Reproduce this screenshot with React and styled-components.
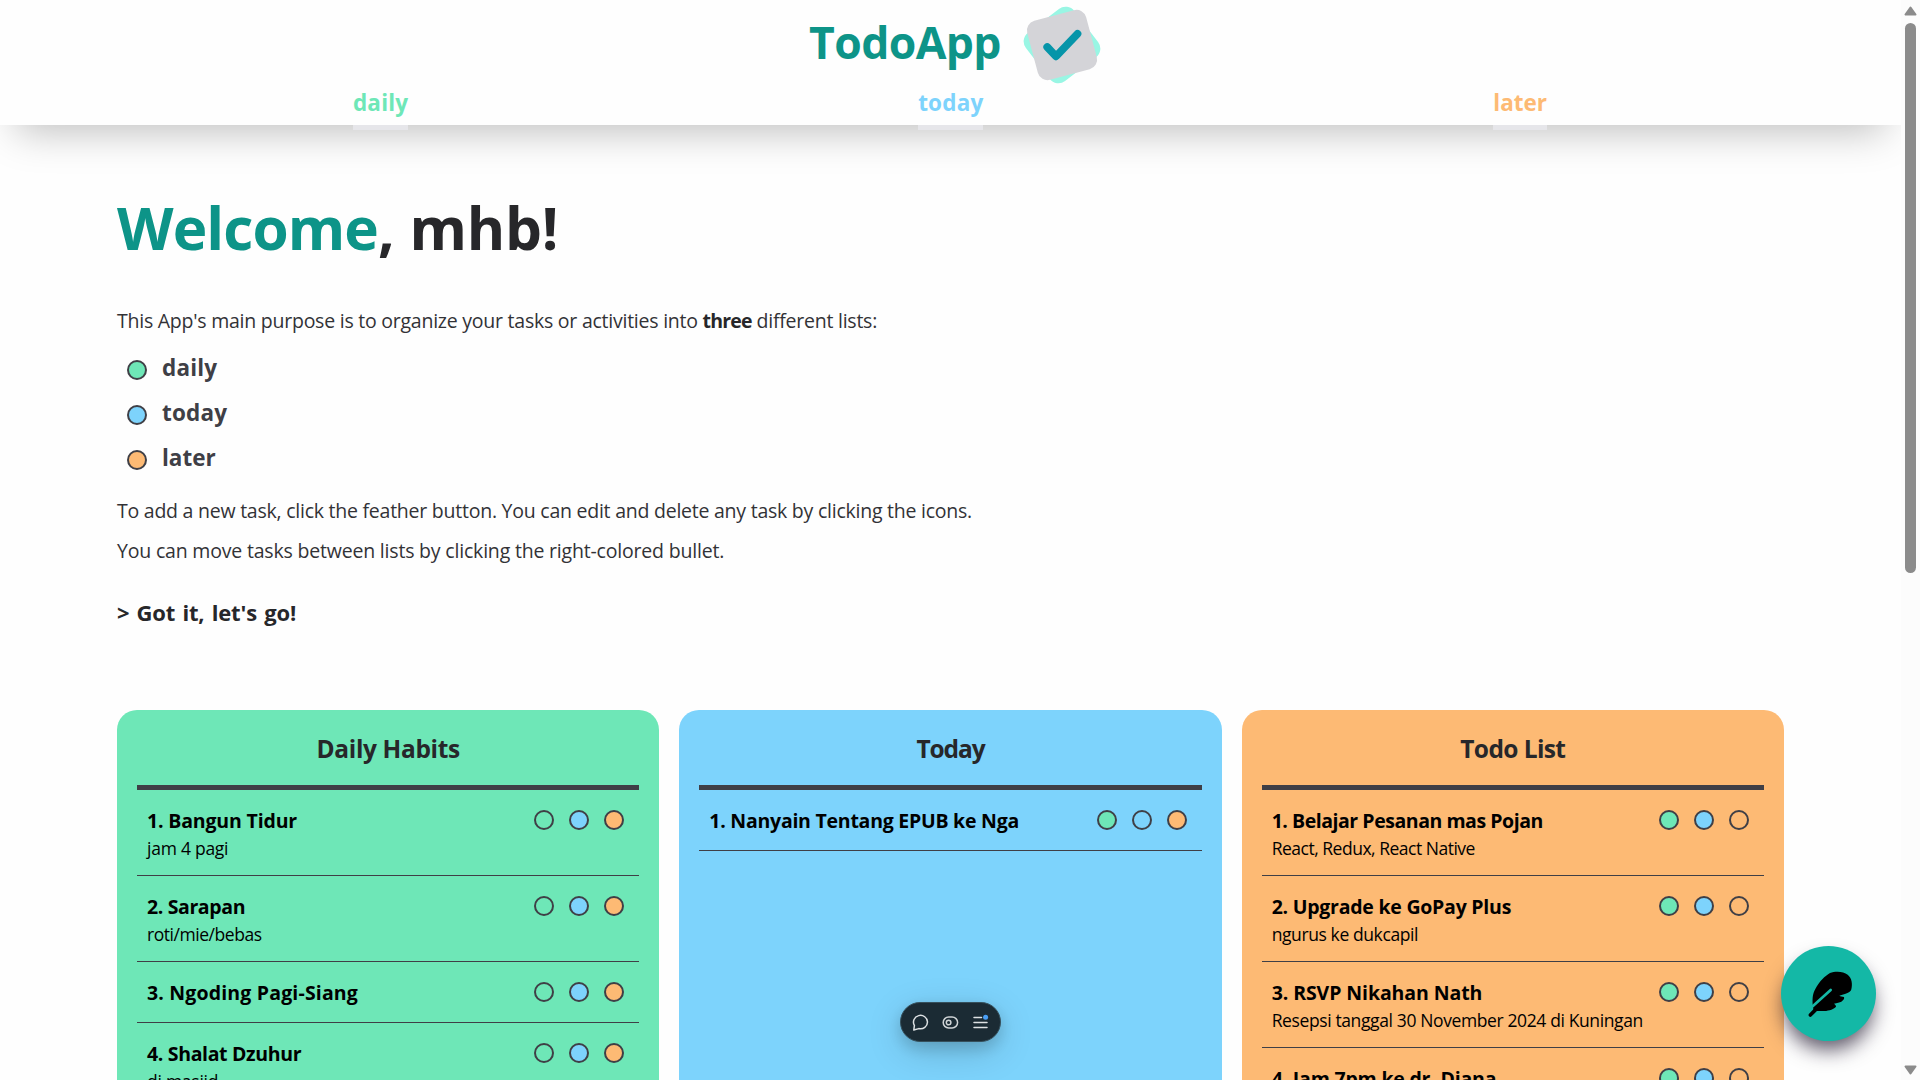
import React from "react";
import styled, { createGlobalStyle, ThemeProvider } from "styled-components";

const theme = {
  daily: "#6ee7b7",
  today: "#7dd3fc",
  later: "#fdba74",
  ink: "#27272a",
  line: "#3f3f46",
  teal: "#0d9488",
};

const GlobalStyle = createGlobalStyle`
  *, *::before, *::after { box-sizing: border-box; }
  html, body { margin: 0; height: 100%; overflow: hidden; background: #fefefe; }
  body { font-family: "Segoe UI", "Open Sans", "Noto Sans", sans-serif; color: #000; }
  h1, h2, h3, p, ul, ol { margin: 0; padding: 0; }
  ul, ol { list-style: none; }
  button { font: inherit; border: 0; padding: 0; cursor: pointer; }
`;

const Page = styled.div`
  width: 1901px;
  height: 1080px;
  overflow: hidden;
`;

const Header = styled.header`
  position: relative;
  z-index: 1;
  height: 125px;
  background: #fefefe;
  box-shadow: 0 22px 40px -16px rgba(0, 0, 0, 0.26);
`;

const Brand = styled.div`
  display: flex;
  justify-content: center;
  align-items: center;
  gap: 21px;
  height: 85px;
  padding: 5px 0 0 10px;
`;

const BrandName = styled.h1`
  padding-bottom: 6px;
  font-size: 44.5px;
  font-weight: 700;
  line-height: 60px;
  letter-spacing: -0.6px;
  color: ${({ theme }) => theme.teal};
`;

const Nav = styled.nav`
  display: flex;
  justify-content: space-around;
  align-items: flex-start;
  height: 40px;
  padding: 0 99px 0 98px;
`;

const NavLink = styled.a`
  border-bottom: 5px solid #e6e6ea;
  padding-bottom: 5px;
  font-size: 22.5px;
  font-weight: 700;
  line-height: 35px;
  letter-spacing: ${({ $track }) => $track}px;
  color: ${({ theme, $list }) => theme[$list]};
`;

const Main = styled.main`
  padding: 72px 117px 0;
`;

const Welcome = styled.h2`
  font-size: 58.5px;
  font-weight: 700;
  line-height: 60px;
  letter-spacing: -0.2px;
  color: ${({ theme }) => theme.ink};
`;

const Accent = styled.span`
  letter-spacing: -0.9px;
  color: ${({ theme }) => theme.teal};
`;

const Intro = styled.section`
  margin-top: 44px;
  color: #323236;
`;

const Text = styled.p`
  font-size: 19.5px;
  line-height: 40px;
  letter-spacing: ${({ $track = -0.24 }) => $track}px;
`;

const Strong = styled.strong`
  font-weight: 700;
  letter-spacing: -0.8px;
  color: ${({ theme }) => theme.ink};
`;

const Legend = styled.ul`
  margin: 6px 0 9px;
  padding-left: 10px;
`;

const LegendItem = styled.li`
  display: flex;
  align-items: flex-start;
  gap: 15px;
  height: 45px;
  font-size: 22.5px;
  font-weight: 700;
  line-height: 41px;
  letter-spacing: ${({ $track }) => $track}px;
  color: ${({ theme }) => theme.line};
`;

const Bullet = styled.span`
  flex: none;
  width: 20px;
  height: 20px;
  border: 2px solid ${({ theme }) => theme.line};
  border-radius: 50%;
  background: ${({ theme, $list }) => ($list ? theme[$list] : "transparent")};
`;

const LegendBullet = styled(Bullet)`
  margin-top: 13px;
`;

const Dismiss = styled.button`
  display: block;
  margin-top: 26px;
  background: none;
  font-size: 22px;
  font-weight: 700;
  line-height: 30px;
  letter-spacing: -0.15px;
  word-spacing: 1.6px;
  color: ${({ theme }) => theme.ink};
`;

const Board = styled.div`
  display: grid;
  grid-template-columns: repeat(3, 1fr);
  gap: 20px;
  margin-top: 83px;
`;

const Card = styled.section`
  min-height: 700px;
  padding: 0 20px;
  border-radius: 20px;
  background: ${({ theme, $list }) => theme[$list]};
`;

const CardTitle = styled.h3`
  height: 80px;
  border-bottom: 5px solid ${({ theme }) => theme.line};
  font-size: 24.5px;
  font-weight: 700;
  line-height: 77px;
  letter-spacing: ${({ $track }) => $track}px;
  text-align: center;
  color: ${({ theme }) => theme.ink};
`;

const TaskRow = styled.li`
  display: flex;
  justify-content: space-between;
  padding: 16px 15px 14px 10px;
  border-bottom: 1px solid ${({ theme }) => theme.line};
`;

const TaskTitle = styled.p`
  font-size: 19.5px;
  font-weight: 700;
  line-height: 30px;
  letter-spacing: ${({ $track }) => $track}px;
`;

const TaskNote = styled.p`
  font-size: 17.5px;
  line-height: 25px;
  letter-spacing: ${({ $track }) => $track}px;
`;

const Bullets = styled.div`
  display: flex;
  gap: 15px;
  padding-top: 4px;
`;

const Fab = styled.button`
  position: fixed;
  z-index: 2;
  left: 1781px;
  top: 946px;
  display: grid;
  place-items: center;
  width: 95px;
  height: 95px;
  border-radius: 50%;
  background: #14b8a6;
  box-shadow: 0 12px 20px -3px rgba(24, 16, 40, 0.7);
`;

const Toolbar = styled.div`
  position: fixed;
  z-index: 2;
  left: 900px;
  top: 1002px;
  display: flex;
  justify-content: center;
  align-items: center;
  gap: 13px;
  width: 101px;
  height: 40px;
  border: 1px solid #36505c;
  border-radius: 20px;
  background: #1b2b34;
  box-shadow: 0 6px 16px rgba(0, 0, 0, 0.16), 0 10px 36px rgba(0, 0, 0, 0.16);
`;

const Scrollbar = styled.div`
  position: fixed;
  z-index: 3;
  top: 0;
  right: 0;
  display: flex;
  flex-direction: column;
  align-items: center;
  justify-content: space-between;
  width: 19px;
  height: 1080px;
  padding: 6px 0 5px;
  background: #fcfcfc;
`;

const Thumb = styled.div`
  width: 11px;
  height: 550px;
  margin: 7px 0 auto;
  border-radius: 6px;
  background: #8b8b8b;
`;

const LogoIcon = () => (
  <svg width="80" height="80" viewBox="-40 -40 80 80">
    <rect x="-30.5" y="-30.5" width="61" height="61" rx="11" fill="#99f6e4" transform="rotate(-37.5)" />
    <rect x="-30.5" y="-30.5" width="61" height="61" rx="10" fill="#d4d4d8" transform="rotate(-15)" />
    <path d="M-14.8 2L-6 11.3L15.5-11.2" fill="none" stroke="#0695a9" strokeWidth="7.7" strokeLinecap="round" strokeLinejoin="round" />
  </svg>
);

const FeatherIcon = () => (
  <svg width="50" height="50" viewBox="129 115 150 150">
    <path d="M155 223C154 200 155 190 163 175C175 152 192 136 207 127C222 121 247 121 260 132C273 143 275 160 271 176C269 184 262 188 235 195C238 198 244 197 249 199C251 204 247 209 241 213C236 216 228 216 219 219C223 222 225 224 225 228C220 235 205 240 190 241C180 242 171 240 166 241L158 241Z" />
    <path d="M150 231L209 178" fill="none" stroke="#14b8a6" strokeWidth="8" strokeLinecap="round" />
    <path d="M148 253L164 237L182 220" fill="none" stroke="#000" strokeWidth="11" strokeLinecap="round" />
  </svg>
);

const ChatIcon = () => (
  <svg width="17" height="17" viewBox="0 0 17 17" fill="none" stroke="#dde1e3" strokeWidth="1.5" strokeLinejoin="round">
    <path d="M1.8 16L2.4 11.4A7 6.7 0 1 1 6.8 14.6Z" />
  </svg>
);

const ToggleIcon = () => (
  <svg width="17" height="17" viewBox="0 0 17 17" fill="none" stroke="#cfd4d6" strokeWidth="1.5">
    <rect x="1.2" y="3" width="14.4" height="11" rx="5.5" />
    <circle cx="6.6" cy="8.5" r="2.3" />
  </svg>
);

const MenuIcon = () => (
  <svg width="17" height="17" viewBox="0 0 17 17" fill="none" stroke="#dde1e3" strokeWidth="1.5" strokeLinecap="round">
    <path d="M2 3.5H9.5M2 8.5H15M2 13.5H15" />
    <circle cx="13.6" cy="3.2" r="2.5" fill="#4a9ff5" stroke="none" />
  </svg>
);

const ArrowIcon = ({ down }) => (
  <svg width="13" height="10" viewBox="0 0 13 10">
    <path
      d={down ? "M1.5 1.5H11.5L6.5 8.5Z" : "M1.5 8.5H11.5L6.5 1.5Z"}
      fill="#8b8b8b"
      stroke="#8b8b8b"
      strokeWidth="2"
      strokeLinejoin="round"
    />
  </svg>
);

const LISTS = ["daily", "today", "later"];
const LABELS = [
  { list: "daily", track: 0.2 },
  { list: "today", track: 0.2 },
  { list: "later", track: 0 },
];

const CARDS = [
  {
    list: "daily",
    title: "Daily Habits",
    track: -0.36,
    tasks: [
      { title: "Bangun Tidur", track: -0.16, note: "jam 4 pagi", noteTrack: -0.25 },
      { title: "Sarapan", track: -0.38, note: "roti/mie/bebas", noteTrack: -0.45 },
      { title: "Ngoding Pagi-Siang", track: 0.17 },
      { title: "Shalat Dzuhur", track: -0.34, note: "di masjid", noteTrack: -0.25 },
    ],
  },
  {
    list: "today",
    title: "Today",
    track: -1.1,
    tasks: [{ title: "Nanyain Tentang EPUB ke Nga", track: -0.25 }],
  },
  {
    list: "later",
    title: "Todo List",
    track: -0.6,
    tasks: [
      { title: "Belajar Pesanan mas Pojan", track: -0.46, note: "React, Redux, React Native", noteTrack: -0.49 },
      { title: "Upgrade ke GoPay Plus", track: -0.24, note: "ngurus ke dukcapil", noteTrack: -0.4 },
      { title: "RSVP Nikahan Nath", track: -0.09, note: "Resepsi tanggal 30 November 2024 di Kuningan", noteTrack: -0.38 },
      { title: "Jam 7pm ke dr. Diana", track: -0.2 },
    ],
  },
];

function Task({ number, task, list }) {
  return (
    <TaskRow>
      <div>
        <TaskTitle $track={task.track}>{`${number}. ${task.title}`}</TaskTitle>
        {task.note && <TaskNote $track={task.noteTrack}>{task.note}</TaskNote>}
      </div>
      <Bullets>
        {LISTS.map((name) => (
          <Bullet key={name} $list={name === list ? null : name} />
        ))}
      </Bullets>
    </TaskRow>
  );
}

export default function App() {
  return (
    <ThemeProvider theme={theme}>
      <GlobalStyle />
      <Page>
        <Header>
          <Brand>
            <BrandName>TodoApp</BrandName>
            <LogoIcon />
          </Brand>
          <Nav>
            {LABELS.map(({ list, track }) => (
              <NavLink key={list} $list={list} $track={track}>
                {list}
              </NavLink>
            ))}
          </Nav>
        </Header>
        <Main>
          <Welcome>
            <Accent>Welcome</Accent>, mhb!
          </Welcome>
          <Intro>
            <Text>
              This App's main purpose is to organize your tasks or activities into <Strong>three</Strong> different lists:
            </Text>
            <Legend>
              {LABELS.map(({ list, track }) => (
                <LegendItem key={list} $track={track}>
                  <LegendBullet $list={list} />
                  {list}
                </LegendItem>
              ))}
            </Legend>
            <Text>
              To add a new task, click the feather button. You can edit and delete any task by clicking the icons.
            </Text>
            <Text $track={-0.19}>You can move tasks between lists by clicking the right-colored bullet.</Text>
            <Dismiss>&gt; Got it, let's go!</Dismiss>
          </Intro>
          <Board>
            {CARDS.map(({ list, title, track, tasks }) => (
              <Card key={list} $list={list}>
                <CardTitle $track={track}>{title}</CardTitle>
                <ol>
                  {tasks.map((task, i) => (
                    <Task key={task.title} number={i + 1} task={task} list={list} />
                  ))}
                </ol>
              </Card>
            ))}
          </Board>
        </Main>
      </Page>
      <Toolbar>
        <ChatIcon />
        <ToggleIcon />
        <MenuIcon />
      </Toolbar>
      <Fab aria-label="Add task">
        <FeatherIcon />
      </Fab>
      <Scrollbar>
        <ArrowIcon />
        <Thumb />
        <ArrowIcon down />
      </Scrollbar>
    </ThemeProvider>
  );
}
